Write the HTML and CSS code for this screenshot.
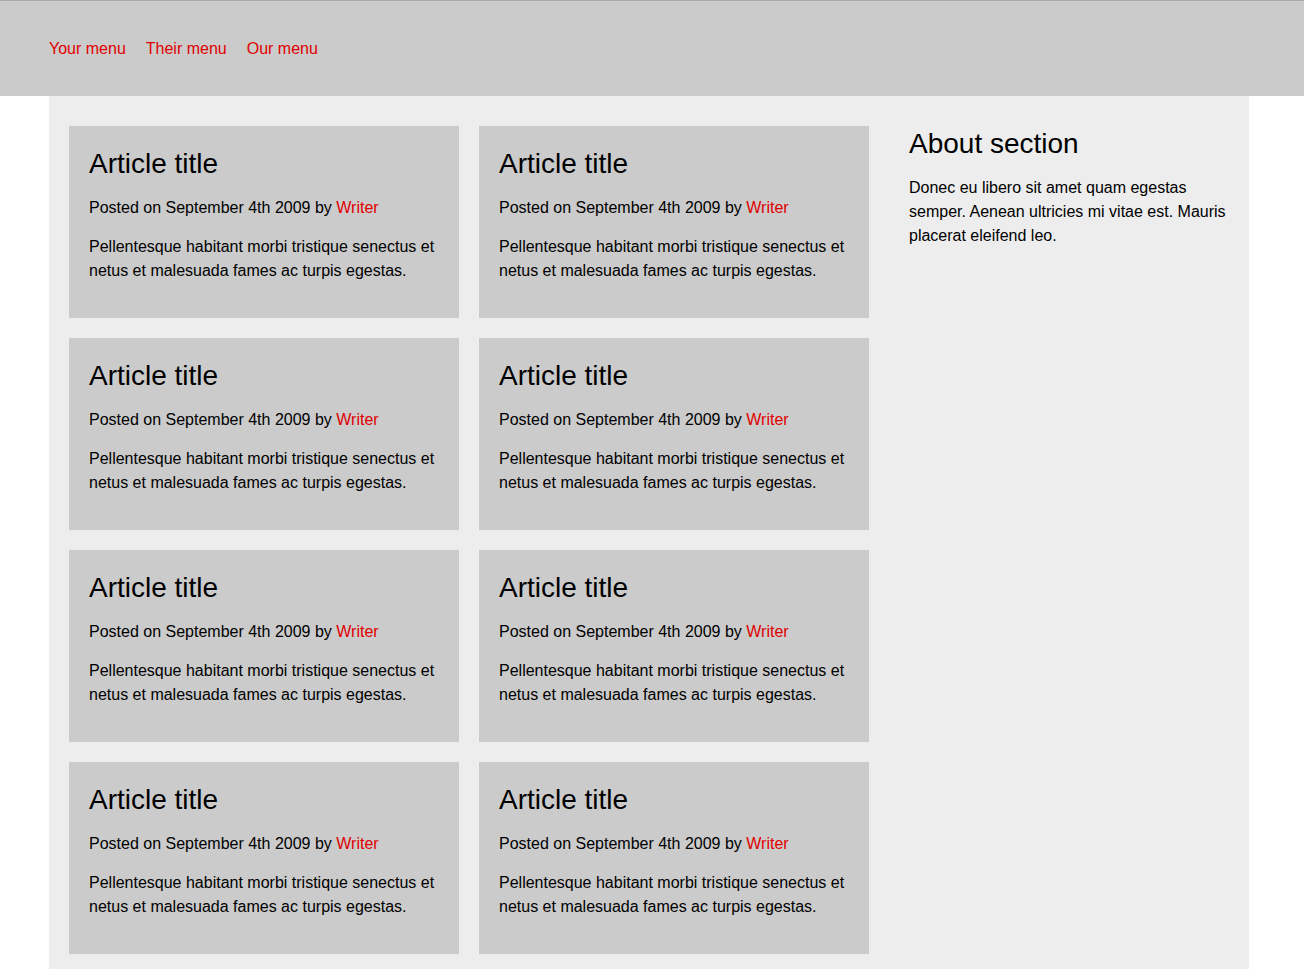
FILE: index.html
```html
<!DOCTYPE html>
<html lang="en">
<head>
<meta charset="utf-8">
<title>Articles</title>
<link rel="stylesheet" href="styles.css">
</head>
<body>
<header class="site-header">
  <nav class="menu">
    <a href="#">Your menu</a>
    <a href="#">Their menu</a>
    <a href="#">Our menu</a>
  </nav>
</header>
<main class="container">
  <section class="articles">
    <article class="card"><h2>Article title</h2><p>Posted on September 4th 2009 by <a href="#">Writer</a></p><p>Pellentesque habitant morbi tristique senectus et netus et malesuada fames ac turpis egestas.</p></article>
    <article class="card"><h2>Article title</h2><p>Posted on September 4th 2009 by <a href="#">Writer</a></p><p>Pellentesque habitant morbi tristique senectus et netus et malesuada fames ac turpis egestas.</p></article>
    <article class="card"><h2>Article title</h2><p>Posted on September 4th 2009 by <a href="#">Writer</a></p><p>Pellentesque habitant morbi tristique senectus et netus et malesuada fames ac turpis egestas.</p></article>
    <article class="card"><h2>Article title</h2><p>Posted on September 4th 2009 by <a href="#">Writer</a></p><p>Pellentesque habitant morbi tristique senectus et netus et malesuada fames ac turpis egestas.</p></article>
    <article class="card"><h2>Article title</h2><p>Posted on September 4th 2009 by <a href="#">Writer</a></p><p>Pellentesque habitant morbi tristique senectus et netus et malesuada fames ac turpis egestas.</p></article>
    <article class="card"><h2>Article title</h2><p>Posted on September 4th 2009 by <a href="#">Writer</a></p><p>Pellentesque habitant morbi tristique senectus et netus et malesuada fames ac turpis egestas.</p></article>
    <article class="card"><h2>Article title</h2><p>Posted on September 4th 2009 by <a href="#">Writer</a></p><p>Pellentesque habitant morbi tristique senectus et netus et malesuada fames ac turpis egestas.</p></article>
    <article class="card"><h2>Article title</h2><p>Posted on September 4th 2009 by <a href="#">Writer</a></p><p>Pellentesque habitant morbi tristique senectus et netus et malesuada fames ac turpis egestas.</p></article>
  </section>
  <aside class="about">
    <h2>About section</h2>
    <p>Donec eu libero sit amet quam egestas semper. Aenean ultricies mi vitae est. Mauris placerat eleifend leo.</p>
  </aside>
</main>
</body>
</html>
```
FILE: styles.css
```css
* { box-sizing: border-box; }
html, body {
  margin: 0;
  padding: 0;
  background: #fff;
  font-family: "Liberation Sans", Arial, sans-serif;
  font-size: 16px;
  line-height: 24px;
  color: #000;
}
a { color: #e00000; text-decoration: none; }
.site-header {
  background: #cbcbcb;
  border-top: 1px solid #a9a9a9;
  height: 96px;
  display: flex;
  align-items: center;
  padding-left: 49px;
}
.menu {
  display: flex;
  gap: 20px;
  padding-top: 1px;
}
.container {
  width: 1200px;
  margin-left: 49px;
  background: #ededed;
  padding: 30px 20px 20px 20px;
  display: grid;
  grid-template-columns: 800px 320px;
  column-gap: 40px;
  align-items: start;
}
.articles {
  display: grid;
  grid-template-columns: 390px 390px;
  gap: 20px;
}
.card {
  background: #cbcbcb;
  padding: 21px 20px 20px 20px;
}
h2 {
  font-size: 28px;
  font-weight: normal;
  line-height: 34px;
  margin: 0 0 15px 0;
}
.card p { margin: 0 0 15px 0; }
.about h2 { margin: 1px 0 15px 0; }
.about p { margin: 0; }
```
